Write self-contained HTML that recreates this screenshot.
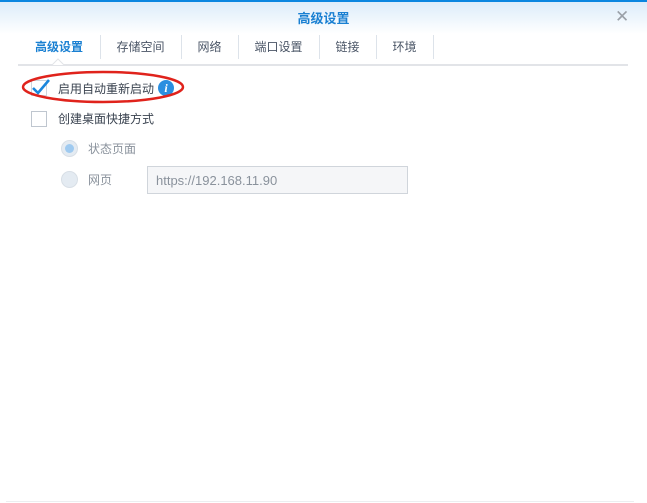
<!DOCTYPE html>
<html><head><meta charset="utf-8"><style>
body{margin:0;width:647px;height:503px;overflow:hidden;background:#fff;font-family:"Liberation Sans","Noto Sans CJK SC",sans-serif;position:relative}
.top{position:absolute;left:0;top:0;width:647px;height:2px;background:#0a86e0}
.hdr{position:absolute;left:0;top:2px;width:647px;height:32px;background:linear-gradient(#dcecfa,#fff)}
.title{position:absolute;left:0;width:647px;top:8px;text-align:center;font-size:13px;color:#1a80d2;font-weight:bold}
.x{position:absolute;left:615px;top:7px;font-size:17px;color:#9aa0a8}
.tabs{position:absolute;top:35px;left:18px;height:24px;font-size:12px}
.tab{position:absolute;top:0;height:24px;line-height:24px;border-right:1px solid #dde3ea;text-align:center;color:#4a5566}
.line{position:absolute;left:18px;top:64px;width:610px;height:2px;background:#e2e4e8}
.t{position:absolute;font-size:12px;color:#3a4350}
.cb{position:absolute;width:16px;height:16px;border:1px solid #bfc6cf;background:#fff;box-sizing:border-box}
.rd{position:absolute;width:17px;height:17px;border-radius:50%;background:#e4ebf2;border:1px solid #d8dfe6;box-sizing:border-box}
</style></head><body>
<div class="top"></div><div class="hdr"></div>
<div class="title">高级设置</div>
<div class="x">✕</div>
<div class="tabs">
<div class="tab" style="left:0;width:82px;color:#1a80d2;font-weight:bold">高级设置</div>
<div class="tab" style="left:82px;width:81px">存储空间</div>
<div class="tab" style="left:163px;width:57px">网络</div>
<div class="tab" style="left:220px;width:81px">端口设置</div>
<div class="tab" style="left:301px;width:57px">链接</div>
<div class="tab" style="left:358px;width:57px">环境</div>
</div>
<div class="line"></div>
<svg style="position:absolute;left:52px;top:58px" width="12" height="8"><path d="M0 7 L6 1 L12 7" fill="#fff" stroke="#e2e4e8"/></svg>
<div class="cb" style="left:31px;top:80px;border-color:#cfd5dc"></div>
<svg style="position:absolute;left:30px;top:77px" width="22" height="20"><path d="M3 11 L8 16 L19 3" fill="none" stroke="#1a86dc" stroke-width="2.6"/></svg>
<div class="t" style="left:58px;top:80px">启用自动重新启动</div>
<div style="position:absolute;left:158px;top:80px;width:16px;height:16px;border-radius:50%;background:#2b8fe0;color:#fff;font:italic bold 12px 'Liberation Serif',serif;text-align:center;line-height:16px">i</div>
<svg style="position:absolute;left:20px;top:68px" width="168" height="38"><ellipse cx="83" cy="19" rx="80" ry="15" fill="none" stroke="#e0231c" stroke-width="2.5"/></svg>
<div class="cb" style="left:31px;top:111px"></div>
<div class="t" style="left:58px;top:110px">创建桌面快捷方式</div>
<div class="rd" style="left:61px;top:140px"></div>
<div style="position:absolute;left:65px;top:144px;width:9px;height:9px;border-radius:50%;background:#9fcaf0"></div>
<div class="t" style="left:88px;top:140px;color:#8a929c">状态页面</div>
<div class="rd" style="left:61px;top:171px"></div>
<div class="t" style="left:88px;top:171px;color:#8a929c">网页</div>
<div style="position:absolute;left:147px;top:166px;width:261px;height:28px;box-sizing:border-box;border:1px solid #d0d5db;background:#f5f6f8;font-size:13px;color:#8a929c;padding:6px 0 0 8px">https://192.168.11.90</div>
<div style="position:absolute;left:6px;top:501px;width:628px;height:1px;background:#eceef0"></div>
</body></html>
